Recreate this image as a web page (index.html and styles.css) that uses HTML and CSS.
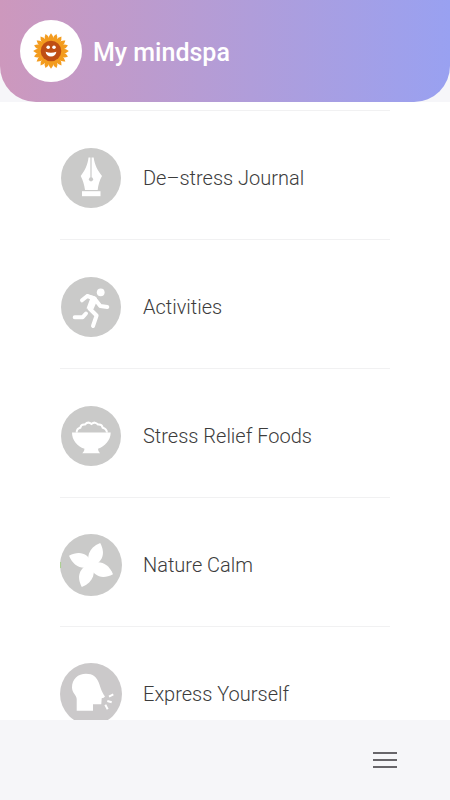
FILE: index.html
```html
<!DOCTYPE html>
<html lang="en">
<head>
    <meta charset="UTF-8">
    <meta name="viewport" content="width=device-width, initial-scale=1.0">
    <title>My mindspa</title>
    <link rel="stylesheet" href="styles.css">
</head>
<body>
    <header class="header">
        <svg class="logo" viewBox="0 0 62 62" aria-hidden="true">
            <defs>
                <path id="petal" d="M28.500 20 Q28.500 15.500 31 13.200 Q33.500 15.500 33.500 20 Z"/>
                <g id="petals">
                    <use href="#petal"/>
                    <use href="#petal" transform="rotate(72 31 31)"/>
                    <use href="#petal" transform="rotate(144 31 31)"/>
                    <use href="#petal" transform="rotate(216 31 31)"/>
                    <use href="#petal" transform="rotate(288 31 31)"/>
                </g>
            </defs>
            <circle cx="31" cy="31" r="31" fill="#fff"/>
            <g fill="#f39c1f">
                <use href="#petals"/>
                <use href="#petals" transform="rotate(18 31 31)"/>
                <use href="#petals" transform="rotate(36 31 31)"/>
                <use href="#petals" transform="rotate(54 31 31)"/>
                <circle cx="31" cy="31" r="12.500"/>
            </g>
            <circle cx="31" cy="31" r="10.300" fill="#bf4e14"/>
            <g fill="#fff">
                <circle cx="28.200" cy="27.300" r="1.800"/>
                <circle cx="34" cy="27.300" r="1.800"/>
                <path d="M25.600 31.800 Q31 33.800 36.400 31.800 Q35.500 36.600 31 36.600 Q26.500 36.600 25.600 31.800 Z"/>
            </g>
        </svg>
        <h1>My mindspa</h1>
    </header>

    <nav class="menu">
        <a class="item" href="#journal">
            <svg class="icon" viewBox="0 0 62 62" aria-hidden="true">
                <circle class="disc" cx="31" cy="31" r="30"/>
                <path class="shape" d="M28.500 10.500 H33.700 C34.500 18 38 24 42 29 C39.500 33 38.300 38 37.700 43 H25 C24.300 38 23 33 20.700 29 C24.500 24 27.800 18 28.500 10.500 Z"/>
                <rect class="shape" x="22" y="44.200" width="18.500" height="5"/>
                <path d="M31 10 V31" stroke="#cacac9" stroke-width="1.200"/>
                <circle class="disc" cx="31" cy="32.300" r="2.100"/>
            </svg>
            <span>De–stress Journal</span>
        </a>
        <a class="item" href="#activities">
            <svg class="icon" viewBox="0 0 62 62" aria-hidden="true">
                <circle class="disc" cx="31" cy="31" r="30"/>
                <circle class="shape" cx="40.700" cy="16.300" r="3.900"/>
                <path class="shape" d="M26 18.300 L34 20 Q38 21 37 25 L33.500 33 L26.500 32.500 L30 23 Z"/>
                <g class="limb">
                    <path d="M22 24.300 L27.300 20 L34 22.300 L29.500 32.500 L36.600 39.500 L33 50"/>
                    <path d="M36 24.500 L40.300 30 L47.300 31"/>
                    <path d="M14.700 41.200 H22.700 L26 37.500"/>
                </g>
            </svg>
            <span>Activities</span>
        </a>
        <a class="item" href="#foods">
            <svg class="icon" viewBox="0 0 62 62" aria-hidden="true">
                <circle class="disc" cx="31" cy="31" r="30"/>
                <path class="shape" d="M12 27.500 H50.700 C50.700 35 45 41.500 38 43.700 Q38 46.500 40 48.300 H22.300 Q24.500 46.500 24.500 43.700 C17 41.500 12 35 12 27.500 Z"/>
                <path class="line" d="M16.700 27.500 Q16.500 23.500 20.300 22.700 Q21 19 25 19.500 Q28 16 31.500 19 Q35 16 38 19.500 Q42 19 42.700 22.700 Q46.500 23.500 47 27.500"/>
            </svg>
            <span>Stress Relief Foods</span>
        </a>
        <a class="item" href="#nature">
            <svg class="icon" viewBox="0 0 62 62" aria-hidden="true">
                <circle class="disc" cx="31" cy="31" r="31"/>
                <path d="M0.600 28 V34" stroke="#a9cf8f" stroke-width="1"/>
                <g class="shape">
                    <path id="leaf" d="M31 33 C25.500 24 28 14 40.200 9 C45.500 19 43.500 28 31 33 Z"/>
                    <use href="#leaf" transform="rotate(90 31 31)"/>
                    <use href="#leaf" transform="rotate(180 31 31)"/>
                    <use href="#leaf" transform="rotate(270 31 31)"/>
                </g>
            </svg>
            <span>Nature Calm</span>
        </a>
        <a class="item" href="#express">
            <svg class="icon" viewBox="0 0 62 62" aria-hidden="true">
                <circle cx="31" cy="31" r="31" fill="#cbc9ca"/>
                <path class="shape" d="M16.700 47.700 V36 C16.500 32 12 30 12 24.300 C12 16 18 10.700 26 10.700 C33 10.700 36.500 14 38.500 19 C40.500 24 41 28 45 33.500 Q44 35.300 41.700 35.300 L41.300 41.300 H33 V47.700 Z"/>
                <path class="line" d="M49 33.700 L53.300 31.300 M47.300 38 L51.700 39.300 M45.300 41.700 L47.700 46.300"/>
            </svg>
            <span>Express Yourself</span>
        </a>
    </nav>

    <footer class="footer">
        <button class="menu-button" type="button" aria-label="Menu">
            <span></span>
            <span></span>
            <span></span>
        </button>
    </footer>
</body>
</html>
```
FILE: styles.css
```css
* {
    box-sizing: border-box;
}

body {
    font-family: Roboto, sans-serif;
    margin: 0;
    height: 100vh;
    display: flex;
    flex-direction: column;
    background-color: #f6f6f9;
    color: #3c3c3c;
}

/* Header */
.header {
    display: flex;
    align-items: center;
    gap: 11px;
    padding: 20px;
    background: linear-gradient(to right, #cd98bd, #99a1f1);
    border-radius: 0 0 36px 36px;
}

.header h1 {
    margin: 0;
    padding-top: 3px;
    color: #fff;
    font-size: 25px;
    font-weight: 500;
}

.logo,
.icon {
    display: block;
    flex: none;
    width: 62px;
    height: 62px;
}

/* Menu list */
.menu {
    flex: 1;
    min-height: 0;
    overflow: hidden;
    padding: 8px 60px 0;
    background-color: #fff;
}

.item {
    display: flex;
    align-items: center;
    gap: 21px;
    padding: 36px 0 30px;
    border-top: 1px solid #f1f1f2;
    color: inherit;
    font-size: 20px;
    font-weight: 300;
    text-decoration: none;
}

/* Icon parts */
.disc {
    fill: #cacac9;
}

.shape {
    fill: #fff;
}

.limb {
    fill: none;
    stroke: #fff;
    stroke-width: 4;
    stroke-linecap: round;
    stroke-linejoin: round;
}

.line {
    fill: none;
    stroke: #fff;
    stroke-width: 2;
}

/* Footer */
.footer {
    display: flex;
    flex: none;
    align-items: center;
    justify-content: flex-end;
    height: 80px;
    padding: 0 53px;
}

.menu-button {
    display: flex;
    flex-direction: column;
    gap: 5px;
    width: 24px;
    padding: 0;
    border: none;
    background: none;
    cursor: pointer;
}

.menu-button span {
    height: 2px;
    background-color: #67656a;
}
```
